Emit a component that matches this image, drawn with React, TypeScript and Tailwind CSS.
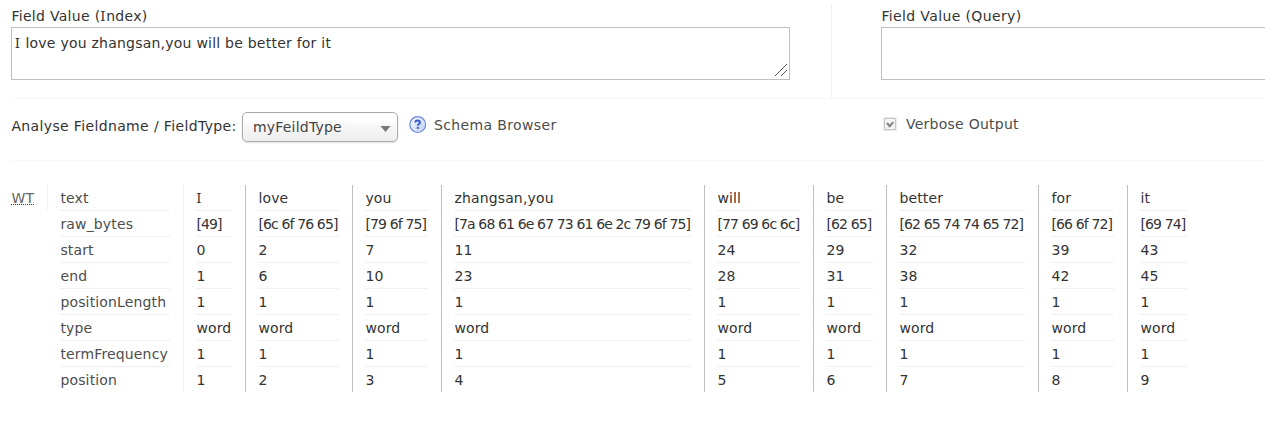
import React from "react";

const labels = ["text", "raw_bytes", "start", "end", "positionLength", "type", "termFrequency", "position"];

type Token = { width: string; values: string[] };

const tokens: Token[] = [
  { width: "w-[62px]", values: ["I", "[49]", "0", "1", "1", "word", "1", "1"] },
  { width: "w-[107px]", values: ["love", "[6c 6f 76 65]", "2", "6", "1", "word", "1", "2"] },
  { width: "w-[89px]", values: ["you", "[79 6f 75]", "7", "10", "1", "word", "1", "3"] },
  { width: "w-[263px]", values: ["zhangsan,you", "[7a 68 61 6e 67 73 61 6e 2c 79 6f 75]", "11", "23", "1", "word", "1", "4"] },
  { width: "w-[109px]", values: ["will", "[77 69 6c 6c]", "24", "28", "1", "word", "1", "5"] },
  { width: "w-[73px]", values: ["be", "[62 65]", "29", "31", "1", "word", "1", "6"] },
  { width: "w-[152px]", values: ["better", "[62 65 74 74 65 72]", "32", "38", "1", "word", "1", "7"] },
  { width: "w-[89px]", values: ["for", "[66 6f 72]", "39", "42", "1", "word", "1", "8"] },
  { width: "w-[73px]", values: ["it", "[69 74]", "43", "45", "1", "word", "1", "9"] },
];

const SerifI = () => <span className="font-['Noto_Sans'] leading-none tracking-[1px]">I</span>;

function Column({ width, border, color, values }: { width: string; border: string; color: string; values: string[] }) {
  return (
    <div className={`${width} ${border} ${color} shrink-0 border-l pl-3 pr-[13px]`}>
      {values.map((v, i) => (
        <div
          key={i}
          className={`h-[26px] border-b border-[#f0f0f0] pl-[0.4px] leading-[26px] whitespace-nowrap last:h-[25px] last:border-b-0 ${i === 1 && v.startsWith("[") ? "tracking-[-0.86px]" : "tracking-[0.15px]"}`}
        >
          {v === "I" ? <SerifI /> : v}
        </div>
      ))}
    </div>
  );
}

function HelpIcon() {
  return (
    <svg className="size-[18px]" viewBox="0 0 18 18">
      <defs>
        <linearGradient id="help" x1="0" y1="0" x2="1" y2="1">
          <stop offset="0" stopColor="#ffffff" />
          <stop offset="1" stopColor="#b9c8f0" />
        </linearGradient>
      </defs>
      <circle cx="8.7" cy="8.6" r="7.8" fill="url(#help)" stroke="#6b8be6" strokeWidth="1.4" />
      <circle cx="8.7" cy="8.6" r="6.7" fill="none" stroke="#e6ecfc" strokeWidth="0.8" />
      <path d="M6.3 6.6C6.3 5 7.3 4.6 8.6 4.6s2.3.5 2.3 1.9c0 1.5-2.1 1.6-2.1 3.2" fill="none" stroke="#3a5fcd" strokeWidth="2" />
      <rect x="7.8" y="10.9" width="2" height="2" fill="#3a5fcd" />
    </svg>
  );
}

export default function App() {
  return (
    <div className="h-[438px] w-[1265px] overflow-hidden bg-white pl-[11px] pt-1 font-['DejaVu_Sans',sans-serif] text-sm text-[#333]">
      <div className="flex h-[95px] border-b border-[#f8f8f8]">
        <div className="w-[820px] shrink-0">
          <div className="h-[23px] pl-[0.4px] leading-6 tracking-[0.3px]">
            Field Value (<SerifI />ndex)
          </div>
          <div className="flex h-[53px] w-[779px] items-end justify-between border border-[#bfbfbf] pl-[3px]">
            <div className="h-full pt-[3px] leading-6 tracking-[0.23px]">
              <SerifI /> love you zhangsan,you will be better for it
            </div>
            <svg className="mb-0.5 mr-0.5 size-[13px]" viewBox="0 0 13 13" fill="none" stroke="#555" shapeRendering="crispEdges">
              <path d="M.5 12.5 12.5.5M6.5 12.5l6-6" />
            </svg>
          </div>
        </div>
        <div className="flex-1 border-l border-[#f0f0f0] pl-[49px]">
          <div className="h-[23px] pl-[0.4px] leading-6 tracking-[0.37px]">Field Value (Query)</div>
          <div className="h-[53px] w-[779px] border border-[#bfbfbf]" />
        </div>
      </div>

      <div className="flex h-[62px] border-b border-[#f8f8f8] pt-[13px]">
        <div className="w-[231px] shrink-0 pl-[0.4px] leading-[28px] whitespace-nowrap tracking-[0.36px]">Analyse Fieldname / FieldType:</div>
        <div className="flex h-[30px] w-[156px] shrink-0 items-center justify-between rounded-[5px] border border-[#aaa] bg-linear-to-b from-white from-20% via-[#f6f6f6] via-50% to-[#eee] pl-2.5 pr-[6px] text-[#444] shadow-[0_1px_2px_rgba(0,0,0,0.12)]">
          <span className="tracking-[0.2px]">myFeildType</span>
          <svg className="mt-1 h-[6px] w-[11px]" viewBox="0 0 11 6">
            <path d="M.5 0h10l-5 6z" fill="#777" />
          </svg>
        </div>
        <div className="ml-[11px] flex h-[26px] w-[474px] shrink-0 text-[#4d4d4d]">
          <div className="mt-[4px]"><HelpIcon /></div>
          <span className="ml-[7px] leading-[26px] tracking-[0.36px]">Schema Browser</span>
        </div>
        <div className="flex text-[#4d4d4d]">
          <svg className="mt-[5px] size-[14px]" viewBox="0 0 14 14">
            <rect width="14" height="14" rx="1.5" fill="#ececec" />
            <rect x="1.5" y="1.5" width="11" height="11" rx=".5" fill="#f4f4f4" stroke="#c4c4c4" />
            <path d="m4 6 2.7 3.2L10.2 5.2" fill="none" stroke="#808080" strokeWidth="2" />
          </svg>
          <span className="ml-[9px] h-[26px] leading-[25px] whitespace-nowrap tracking-[0.25px]">Verbose Output</span>
        </div>
      </div>

      <div className="flex pt-6 text-sm">
        <div className="w-9 shrink-0 pt-[5px] text-[#666]">
          <div className="h-[15px] w-[23px] border-b border-dotted border-[#333] pl-[0.4px] leading-[17px] tracking-[0.2px]">WT</div>
        </div>
        <div className="h-[25px] w-0 border-l border-[#f0f0f0]" />
        <Column width="w-[136px] -ml-px" border="border-transparent" color="text-[#4d4d4d]" values={labels} />
        {tokens.map((t, i) => (
          <Column key={i} width={t.width} border={i === 0 ? "border-[#f0f0f0]" : "border-[#bfbfbf]"} color="text-[#333]" values={t.values} />
        ))}
      </div>
    </div>
  );
}
